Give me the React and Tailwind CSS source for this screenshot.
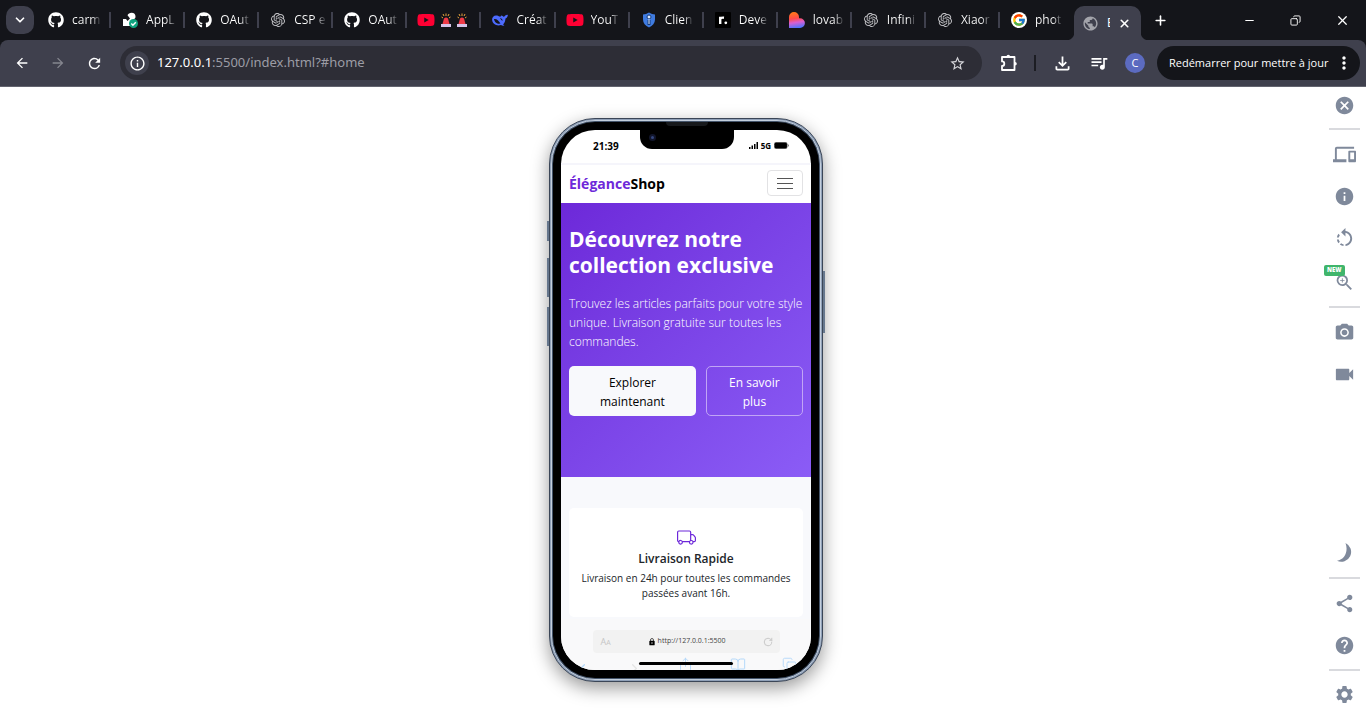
import React from "react";
import { FaGithub, FaYoutube } from "react-icons/fa";
import { SiOpenai } from "react-icons/si";
import { FcGoogle } from "react-icons/fc";
import { BsTruck } from "react-icons/bs";
import {
  MdArrowBack,
  MdArrowForward,
  MdCancel,
  MdDevices,
  MdHelp,
  MdInfo,
  MdInfoOutline,
  MdLock,
  MdMoreVert,
  MdOutlineFileDownload,
  MdPhotoCamera,
  MdPublic,
  MdQueueMusic,
  MdRefresh,
  MdRotateLeft,
  MdSettings,
  MdShare,
  MdStarBorder,
  MdVideocam,
  MdZoomIn,
} from "react-icons/md";
import { BookOpen, ChevronDown, ChevronLeft, ChevronRight, Copy, Minus, Plus, RotateCw, Share, X } from "lucide-react";

function AppIcon() {
  return (
    <svg className="size-4" viewBox="0 0 16 16">
      <path fill="#fff" d="M5.500 3.200C6 1.800 7.800.8 9.500.8a4 4 0 0 1 4 4c0 1-.5 1.800-1.200 2.200L9 9v5H1V7h3l1.500 2L8 6.500z" />
      <circle cx="11.500" cy="11.500" r="4.500" fill="#10a37f" />
      <path d="m9.300 11.600 1.600 1.600 2.900-3" fill="none" stroke="#fff" strokeWidth="1.400" />
    </svg>
  );
}

function WhaleIcon() {
  return (
    <svg className="size-4" viewBox="0 0 16 16">
      <path
        fill="#4d6bfe"
        d="M9.500 3.500c1 0 1.300.8 2 1.200.8.300 1-.8 1.700-1.300.8-.5 1.900-.2 2.700-1-.1 2-.9 3.500-2.400 4-.2 2.600-1 4.500-2.400 6l1.400 1.200c-1.600.4-2.600 0-3.500-.5C4.500 14.500.2 11.800.1 7.500.1 4.700 2.300 2.900 5 3.500c1.500.3 2.100 1 3.300 1.200.6 0 .4-1.200 1.200-1.200z"
      />
      <path fill="#14151a" d="M2 7c2.800-.4 4.500 1.500 6.500 4.600-3 .8-6.200-1.500-6.500-4.600zm6-.6c1.500-.2 2.600.8 2.600 2.300-1-.2-1.300-1.300-2.600-2.300z" />
    </svg>
  );
}

function ShieldIcon() {
  return (
    <svg className="size-4" viewBox="0 0 16 16">
      <path fill="#3f7be0" d="M8 .5c2 1.300 4 1.800 6 1.900v5c0 3.500-2.400 6.200-6 8.100-3.600-1.900-6-4.600-6-8.100v-5C4 2.300 6 1.800 8 .5z" />
      <circle cx="8" cy="5" r="2" fill="#dce9ff" stroke="#173c7b" />
      <path stroke="#173c7b" strokeWidth="3" d="M8 8v5" />
      <path stroke="#dce9ff" strokeWidth="1" d="M8 7v5" />
    </svg>
  );
}

function RoadmapIcon() {
  return (
    <svg className="size-4" viewBox="0 0 16 16">
      <rect width="16" height="16" rx="1" fill="#000" />
      <path d="M5.200 12V4.800M5.200 8c0-2 1.300-2.600 3.800-2.300" fill="none" stroke="#fff" strokeWidth="2.400" />
      <circle cx="10.800" cy="10.800" r="1.400" fill="#fff" />
    </svg>
  );
}

function HeartIcon() {
  return (
    <svg className="size-4" viewBox="0 0 16 16">
      <defs>
        <linearGradient id="heart" x1=".35" y1="0" x2=".5" y2="1">
          <stop offset="0" stopColor="#ff7a18" />
          <stop offset=".4" stopColor="#ff4a4a" />
          <stop offset=".65" stopColor="#d95fd0" />
          <stop offset="1" stopColor="#4b73ff" />
        </linearGradient>
      </defs>
      <path fill="url(#heart)" d="M0 5a5 5 0 0 1 10 0v1.200h1a4.900 4.900 0 0 1 0 9.800H0z" />
    </svg>
  );
}

function Sirens() {
  return (
    <svg className="h-4 w-7" viewBox="0 0 28 16">
      {[0, 16].map((x) => (
        <g key={x} transform={`translate(${x} 1)`}>
          <path d="M1.500 4 3 5M3 1l1 2M6 .5V3M9 1 8 3M10.500 4 9 5" stroke="#e8a33c" />
          <path fill="#f03a47" d="M2.500 11 4 5.500Q6 3.500 8 5.500L9.500 11z" />
          <path fill="#d6c3e8" d="M1 11h10v3H1z" />
        </g>
      ))}
    </svg>
  );
}

function PuzzleIcon() {
  return (
    <svg className="h-[18px] w-[18px]" viewBox="0 0 18 18" fill="none" stroke="currentColor" strokeWidth="1.800">
      <path fill="currentColor" stroke="none" d="M6.500 2.500a1.800 1.800 0 0 1 3.600 0zM15 8a1.800 1.800 0 0 1 0 3.600z" />
      <path strokeLinejoin="round" d="M2 3h12.500v13H2v-4a2.300 2.300 0 0 0 0-4.600z" />
    </svg>
  );
}

const github = <FaGithub className="size-4 text-white" />;
const openai = <SiOpenai className="size-[14px] text-[#c4c4c8]" />;
const youtube = <FaYoutube className="size-[18px] shrink-0 text-[#ff0033]" />;

const tabs = [
  { icon: github, title: "carm" },
  { icon: <AppIcon />, title: "AppL" },
  { icon: github, title: "OAut" },
  { icon: openai, title: "CSP e" },
  { icon: github, title: "OAut" },
  { icon: youtube, drawing: <Sirens /> },
  { icon: <WhaleIcon />, title: "Créat" },
  { icon: youtube, title: "YouT" },
  { icon: <ShieldIcon />, title: "Clien" },
  { icon: <RoadmapIcon />, title: "Deve" },
  { icon: <HeartIcon />, title: "lovab" },
  { icon: openai, title: "Infini" },
  { icon: openai, title: "Xiaor" },
  { icon: <FcGoogle className="size-4 rounded-full bg-white p-px" />, title: "phot" },
];

function TabStrip() {
  return (
    <div className="flex h-10 items-center bg-[#14151a] pl-1.5 text-white">
      <button aria-label="Rechercher des onglets" className="mr-[3px] flex size-7 shrink-0 items-center justify-center rounded-[10px] bg-[#3f404d]">
        <ChevronDown size={14} strokeWidth={3} />
      </button>
      <div className="flex min-w-0 shrink basis-[1037px]">
        {tabs.map((tab, i) => (
          <button key={i} aria-label={tab.drawing ? "YouTube" : undefined} className="flex min-w-0 flex-1 items-center">
            <span className="ml-[11px] flex w-4 shrink-0 justify-center">{tab.icon}</span>
            {tab.drawing ? (
              <span className="ml-1.5">{tab.drawing}</span>
            ) : (
              <span className="ml-2 whitespace-nowrap bg-linear-to-r from-white from-70% to-[#3a3b40] bg-clip-text text-left text-xs text-transparent">
                {tab.title}
              </span>
            )}
            <span className={i === tabs.length - 1 ? "hidden" : "ml-auto h-4 w-0.5 shrink-0 bg-[#3f404d]"} />
          </button>
        ))}
      </div>
      <div className="relative flex h-[34px] w-[67px] shrink-0 items-center self-end rounded-t-[10px] bg-[#3f404d] pl-2">
        <span className="absolute bottom-0 -left-2 size-2 bg-[radial-gradient(circle_at_0_0,#14151a_8px,#3f404d_9px)]" />
        <span className="absolute -right-2 bottom-0 size-2 bg-[radial-gradient(circle_at_100%_0,#14151a_8px,#3f404d_9px)]" />
        <MdPublic className="size-[17px] shrink-0 text-[#a3a4ab]" />
        <span className="ml-2 w-[3px] overflow-hidden text-xs">E</span>
        <button aria-label="Fermer l'onglet" className="ml-2">
          <X size={13} strokeWidth={3} />
        </button>
      </div>
      <button aria-label="Nouvel onglet" className="ml-3 shrink-0">
        <Plus size={15} strokeWidth={2.5} />
      </button>
      <div className="ml-auto flex shrink-0 items-center gap-[34px] pr-4">
        <button aria-label="Réduire">
          <Minus size={13} strokeWidth={2} />
        </button>
        <button aria-label="Restaurer">
          <Copy size={11} strokeWidth={2} className="-scale-x-100" />
        </button>
        <button aria-label="Fermer">
          <X size={15} strokeWidth={2} />
        </button>
      </div>
    </div>
  );
}

function Toolbar() {
  return (
    <div className="bg-[#14151a]">
      <div className="flex h-[47px] items-center rounded-t-lg border-b border-[#63646f] bg-[#3f404d] pr-1.5 pl-3.5 text-white">
        <div className="flex gap-5 pr-[17px]">
          <button aria-label="Retour"><MdArrowBack size={16} /></button>
          <button aria-label="Avancer" className="text-[#85868f]"><MdArrowForward size={16} /></button>
          <button aria-label="Actualiser"><MdRefresh size={17} /></button>
        </div>
        <div className="relative flex h-[34px] min-w-0 flex-1 items-center rounded-full bg-[#2d2d36] pr-4 pl-[5px]">
          <button aria-label="Informations sur le site" className="flex size-6 shrink-0 items-center justify-center rounded-full bg-[#3f404d]">
            <MdInfoOutline size={17} />
          </button>
          <label className="flex min-w-0 flex-1 items-center pl-2 font-[Noto_Sans] text-[13px]">
            <span className="text-white">127.0.0.1</span>
            <input aria-label="Adresse" className="min-w-0 flex-1 bg-transparent text-[#9c9ca5] outline-none" defaultValue=":5500/index.html?#home" />
          </label>
          <button aria-label="Favori"><MdStarBorder size={17} className="text-[#d5d5da]" /></button>
        </div>
        <div className="flex shrink-0 items-center pl-[18px]">
          <button aria-label="Extensions"><PuzzleIcon /></button>
          <span className="ml-4 h-4 w-0.5 bg-[#1c1d23]" />
          <button aria-label="Téléchargements" className="ml-4"><MdOutlineFileDownload size={21} /></button>
          <button aria-label="Médias" className="ml-4"><MdQueueMusic size={20} /></button>
          <button aria-label="Profil" className="ml-4 size-5 rounded-full bg-[#5c6bc0] text-[11px]">C</button>
          <button className="ml-3 flex h-[34px] w-[203px] items-center justify-between rounded-full bg-[#14151a] pr-1.5 pl-3 text-[11px] whitespace-nowrap">
            Redémarrer pour mettre à jour
            <MdMoreVert size={20} className="shrink-0" />
          </button>
        </div>
      </div>
    </div>
  );
}

function Signal() {
  return (
    <svg className="h-[7px] w-[9px]" viewBox="0 0 9 7">
      <path d="M0 5h1.500v2H0zM2.500 3.500H4V7H2.500zM5 2h1.500v5H5zM7.500 0H9v7H7.500z" />
    </svg>
  );
}

function Battery() {
  return (
    <svg className="h-[7px] w-[15px]" viewBox="0 0 15 7">
      <rect x=".25" y=".25" width="13" height="6.500" rx="2" fill="#000" stroke="#777" strokeWidth=".5" />
      <path d="M14 2.300v2.400q1-.4 1-1.200t-1-1.200z" fill="#777" />
    </svg>
  );
}

function ShopPage() {
  return (
    <>
      <header className="flex h-10 items-center justify-between border-t-2 border-[#f5f5fb] px-2 pb-0.5 text-black">
        <a href="#home" className="text-[14px] font-bold">
          <span className="text-[#6d28d9]">Élégance</span>Shop
        </a>
        <button aria-label="Menu" className="flex h-[26px] w-9 flex-col items-center justify-center gap-1 rounded border border-[#e2e2e4]">
          <span className="h-px w-4 bg-[#555]" />
          <span className="h-px w-4 bg-[#555]" />
          <span className="h-px w-4 bg-[#555]" />
        </button>
      </header>
      <section className="h-[274px] bg-linear-135 from-[#6d28d9] to-[#8b5cf6] px-2 pt-[23px] text-white">
        <h1 className="text-[21px] leading-[26px] font-bold whitespace-nowrap">
          Découvrez notre
          <br />
          collection exclusive
        </h1>
        <p className="mt-4 text-xs leading-[19px] font-light whitespace-nowrap">
          Trouvez les articles parfaits pour votre style
          <br />
          unique. Livraison gratuite sur toutes les
          <br />
          commandes.
        </p>
        <div className="mt-[15px] flex gap-2.5 text-xs leading-[19px]">
          <button className="h-[50px] flex-[128] rounded-[5px] bg-[#f8f9fc] pt-0.5 text-black">
            Explorer
            <br />
            maintenant
          </button>
          <button className="h-[50px] flex-[96] rounded-[5px] border border-[#c1a5f5] pt-0.5">
            En savoir
            <br />
            plus
          </button>
        </div>
      </section>
      <section className="h-[142px] bg-[#f8f9fc] px-2 pt-[31px]">
        <article className="flex h-[109px] flex-col items-center rounded-[5px] bg-white pt-5 text-center text-[#212529]">
          <BsTruck className="size-[19px] text-[#6d28d9]" />
          <h2 className="mt-0.5 text-xs leading-[19px] font-semibold">Livraison Rapide</h2>
          <p className="mt-[3px] text-[10px] leading-[15px] whitespace-nowrap">
            Livraison en 24h pour toutes les commandes
            <br />
            passées avant 16h.
          </p>
        </article>
      </section>
    </>
  );
}

function Phone() {
  return (
    <div className="relative h-[564px] w-[274px] rounded-[46px] border border-[#3b4657] bg-[#8fa0b8] p-px shadow-[0_6px_18px_rgba(0,0,0,0.4)]">
      <span className="absolute top-[102px] -left-[3px] h-5 w-0.5 bg-[#66778d]" />
      <span className="absolute top-[139px] -left-[3px] h-[39px] w-0.5 bg-[#66778d]" />
      <span className="absolute top-[188px] -left-[3px] h-[39px] w-0.5 bg-[#66778d]" />
      <span className="absolute top-[152px] -right-[3px] h-[62px] w-0.5 bg-[#66778d]" />
      <div className="h-full rounded-[44px] border border-[#c3cedc] bg-[#44546a] p-px">
        <div className="relative h-full rounded-[42px] bg-black p-2">
          <div className="relative h-full overflow-hidden rounded-[34px] bg-white">
            <div className="flex h-[33px] items-center justify-between pr-[22px] pb-0.5 pl-8 text-black">
              <span className="text-[10px] leading-none font-bold">21:39</span>
              <span className="flex items-center gap-[3px] text-[8px] leading-none font-bold">
                <Signal />5G<Battery />
              </span>
            </div>
            <ShopPage />
            <div className="h-[51px] bg-[#f9f9fa] pt-[11px]">
              <div className="mx-auto flex h-[23px] w-[187px] items-center justify-between rounded bg-[#f2f2f2] pr-[7px] pl-2">
                <span className="text-[9px] text-[#c6c6c6]">A<span className="text-[7px]">A</span></span>
                <span className="flex items-center gap-0.5 text-[7px] text-[#444]">
                  <MdLock size={8} className="text-black" />
                  http://127.0.0.1:5500
                </span>
                <RotateCw size={10} strokeWidth={2} className="text-[#c2c2c2]" />
              </div>
              <div className="flex justify-between px-3.5 pt-1 text-[#b5d9fa]">
                <ChevronLeft size={15} className="mt-1" />
                <ChevronRight size={15} className="mt-1 text-[#e4e4e4]" />
                <Share size={15} strokeWidth={1.500} />
                <BookOpen size={16} strokeWidth={1.500} />
                <Copy size={15} strokeWidth={1.500} />
              </div>
            </div>
            <span className="absolute bottom-[5px] left-[78px] h-[3px] w-[94px] rounded-full bg-black" />
          </div>
          <span className="absolute top-[7px] left-[87px] h-5 w-[94px] rounded-b-[12px] bg-black" />
          <span className="absolute top-0 left-[113px] h-1 w-[42px] rounded-b-sm bg-[#17191c]" />
          <span className="absolute top-[12px] left-[96px] size-[7px] rounded-full border-2 border-[#11152b] bg-[#34467c]" />
        </div>
      </div>
    </div>
  );
}

function Moon() {
  return (
    <svg width="16" height="19" viewBox="0 0 16 19" fill="currentColor">
      <path d="M8.500 0A9.700 9.700 0 1 1 0 17.800C8 16.500 11.500 8 8.500 0z" />
    </svg>
  );
}

function Slot({ label, children }) {
  return (
    <button aria-label={label} className="relative flex h-[42px] w-full items-center justify-center">
      {children}
    </button>
  );
}

function SideTools() {
  return (
    <aside className="mr-1.5 flex w-[31px] flex-col justify-self-end text-[#7f899b]">
      <div className="h-[43px] border-b-2 border-[#d9dade]">
        <button aria-label="Fermer le simulateur" className="flex h-9 w-full items-center justify-center">
          <MdCancel size={21} />
        </button>
      </div>
      <div className="border-b-2 border-[#d9dade] pt-[3px] pb-[5px]">
        <Slot label="Appareils"><MdDevices size={23} /></Slot>
        <Slot label="Informations"><MdInfo size={21} /></Slot>
        <Slot label="Pivoter"><MdRotateLeft size={23} /></Slot>
        <Slot label="Zoom">
          <MdZoomIn size={21} className="mt-1" />
          <span className="absolute top-[6px] -left-[5px] rounded-xs bg-[#3fb56b] px-[3px] text-[6px] leading-[11px] font-extrabold text-white">NEW</span>
        </Slot>
      </div>
      <div className="pt-[3px]">
        <Slot label="Photo"><MdPhotoCamera size={21} /></Slot>
        <Slot label="Vidéo"><MdVideocam size={23} /></Slot>
      </div>
      <div className="mt-auto border-b-2 border-[#d9dade] pb-1">
        <Slot label="Mode sombre"><Moon /></Slot>
      </div>
      <div className="border-b-2 border-[#d9dade] py-[3px]">
        <Slot label="Partager"><MdShare size={21} /></Slot>
        <Slot label="Aide"><MdHelp size={21} /></Slot>
      </div>
      <div className="pt-0.5 pb-[5px]">
        <Slot label="Paramètres"><MdSettings size={21} /></Slot>
      </div>
    </aside>
  );
}

export default function App() {
  return (
    <div className="flex min-h-screen flex-col bg-white font-['Open_Sans','Noto_Sans',sans-serif]">
      <TabStrip />
      <Toolbar />
      <main className="grid flex-1 grid-cols-[1fr_auto_1fr] pl-1.5">
        <span />
        <div className="pt-[31px] pb-8">
          <Phone />
        </div>
        <SideTools />
      </main>
    </div>
  );
}
